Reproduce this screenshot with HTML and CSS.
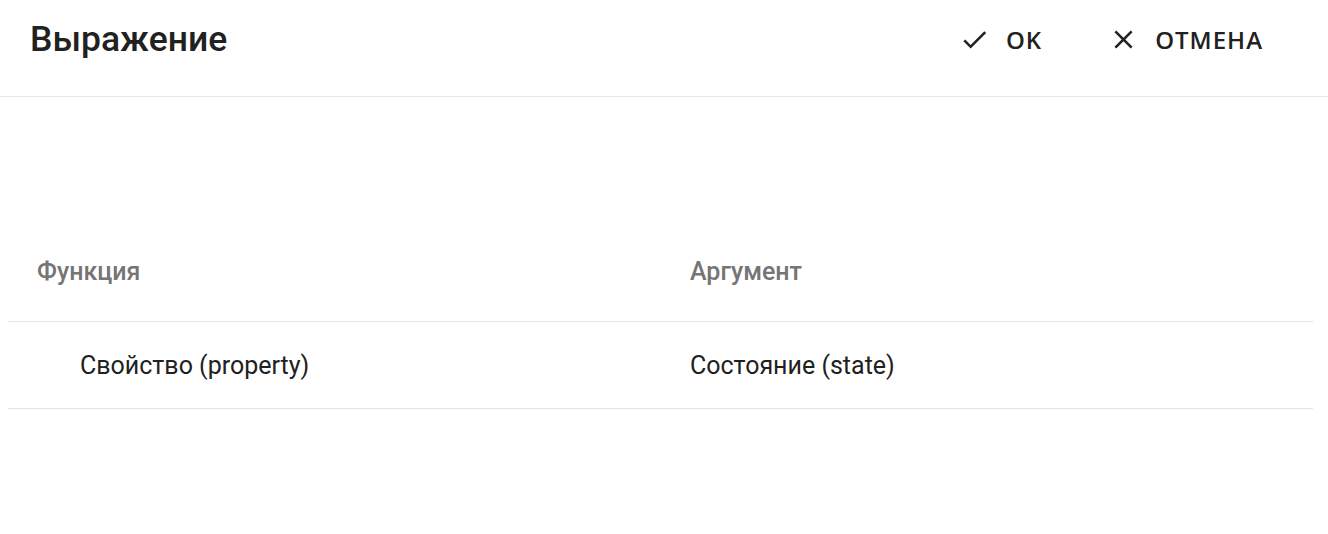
FILE: index.html
```html
<!DOCTYPE html>
<html lang="ru">
<head>
<meta charset="utf-8">
<link rel="stylesheet" href="styles.css">
</head>
<body>
<div class="dialog">
  <header class="toolbar">
    <h1 class="title">Выражение</h1>
    <div class="actions">
      <button class="btn">
        <svg class="icon" viewBox="0 0 24 24"><path d="M9 16.17L4.83 12l-1.42 1.41L9 19 21 7l-1.41-1.41z"/></svg>
        <span>OK</span>
      </button>
      <button class="btn">
        <svg class="icon" viewBox="0 0 24 24"><path d="M19 6.41L17.59 5 12 10.59 6.41 5 5 6.41 10.59 12 5 17.59 6.41 19 12 13.41 17.59 19 19 17.59 13.41 12z"/></svg>
        <span>ОТМЕНА</span>
      </button>
    </div>
  </header>
  <div class="content">
    <div class="table">
      <div class="row head">
        <div class="cell">Функция</div>
        <div class="cell">Аргумент</div>
      </div>
      <div class="row">
        <div class="cell indent">Свойство (property)</div>
        <div class="cell">Состояние (state)</div>
      </div>
    </div>
  </div>
</div>
</body>
</html>
```
FILE: styles.css
```css
* { box-sizing: border-box; }
html, body { margin: 0; padding: 0; background: #fff; }
body { font-family: Roboto, "Noto Sans", sans-serif; color: #212121; }

.dialog { width: 1328px; height: 534px; }

.toolbar {
  height: 97px;
  display: flex;
  align-items: center;
  justify-content: space-between;
  padding: 0 51px 18px 30px;
  border-bottom: 1px solid #e8e8e8;
}
.title {
  margin: 0;
  font-size: 35.5px;
  font-weight: 500;
  color: #212121;
}
.actions { display: flex; gap: 38px; align-items: center; }
.btn {
  display: flex;
  align-items: center;
  gap: 16px;
  background: none;
  border: 0;
  padding: 0 14px;
  font-family: "Open Sans", sans-serif;
  font-weight: 600;
  font-size: 24px;
  letter-spacing: 1px;
  color: #212121;
  cursor: pointer;
}
.icon { width: 31px; height: 31px; fill: #212121; }

.content { padding: 138px 15px 0 8px; }
.table { width: 1305px; }
.row {
  display: grid;
  grid-template-columns: 653px 1fr;
  height: 87px;
  align-items: center;
  border-bottom: 1px solid #e4e4e4;
}
.cell { padding-left: 29px; font-size: 25px; color: #212121; }
.cell.indent { padding-left: 72px; }
.head .cell { font-weight: 500; color: #757575; padding-bottom: 14px; }
```
